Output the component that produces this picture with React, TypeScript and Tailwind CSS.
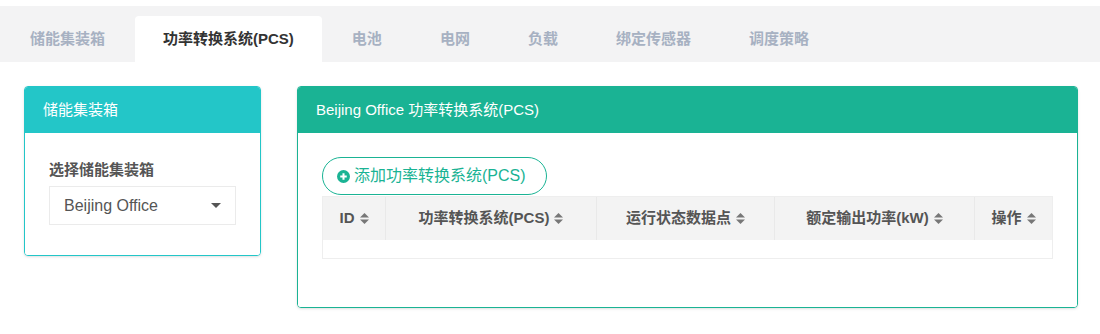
import React from 'react';

const font = { fontFamily: '"Liberation Sans", "Noto Sans CJK SC", sans-serif' };

function SortIcon() {
  return (
    <svg width="9" height="13" viewBox="0 0 9 13" className="ml-[5px] inline-block">
      <path d="M0 5.5 L4.5 1 L9 5.5 Z" fill="#777" />
      <path d="M0 7.5 L4.5 12 L9 7.5 Z" fill="#777" />
    </svg>
  );
}

export default function App() {
  const tabs = ['储能集装箱', '功率转换系统(PCS)', '电池', '电网', '负载', '绑定传感器', '调度策略'];
  const active = 1;

  const columns = [
    { label: 'ID', width: 'w-[62px]' },
    { label: '功率转换系统(PCS)', width: 'w-[211px]' },
    { label: '运行状态数据点', width: 'w-[178px]' },
    { label: '额定输出功率(kW)', width: 'w-[200px]' },
    { label: '操作', width: 'flex-1' },
  ];

  return (
    <div className="w-[1100px] h-[334px] bg-white pt-[6px]" style={font}>
      {/* Tabs */}
      <div className="flex h-[56px] items-end bg-[#f3f3f4] pl-[2px] gap-[2px]">
        {tabs.map((tab, i) => (
          <div
            key={tab}
            className={`h-[46px] px-[28px] flex items-center text-[15px] font-bold ${
              i === active ? 'bg-white text-[#333] rounded-t-[4px]' : 'text-[#a7b1c2]'
            }`}
          >
            <span>{tab}</span>
          </div>
        ))}
      </div>

      {/* Content */}
      <div className="flex items-start gap-[36px] pl-[24px] pt-[24px]">
        {/* Left panel */}
        <div className="w-[237px] rounded-[4px] border border-[#23c6c8] shadow-sm overflow-hidden">
          <div className="h-[46px] bg-[#23c6c8] text-white text-[15px] flex items-center px-[18px]">储能集装箱</div>
          <div className="px-[24px] pt-[26px] pb-[30px] bg-white">
            <div className="text-[15px] font-bold text-[#555] leading-[22px] mb-[5px]">选择储能集装箱</div>
            <div className="h-[39px] border border-[#ebebeb] flex items-center justify-between pl-[14px] pr-[14px] text-[16px] text-[#555]">
              <span>Beijing Office</span>
              <svg width="10" height="5" viewBox="0 0 10 5">
                <path d="M0 0 L10 0 L5 5 Z" fill="#555" />
              </svg>
            </div>
          </div>
        </div>

        {/* Right panel */}
        <div className="w-[781px] rounded-[4px] border border-[#1ab394] shadow-sm overflow-hidden">
          <div className="h-[46px] bg-[#1ab394] text-white text-[15px] flex items-center px-[18px]">Beijing Office 功率转换系统(PCS)</div>
          <div className="bg-white px-[24px] pt-[24px] pb-[48px]">
            <button className="h-[38px] w-[225px] rounded-full border border-[#1ab394] text-[#1ab394] text-[16px] flex items-center pl-[14px]">
              <svg width="13" height="13" viewBox="0 0 14 14" className="mr-[4px]">
                <circle cx="7" cy="7" r="7" fill="#1ab394" />
                <path d="M7 3.5 V10.5 M3.5 7 H10.5" stroke="white" strokeWidth="2.2" />
              </svg>
              添加功率转换系统(PCS)
            </button>
            <div className="mt-[1px] border border-[#eeeeee]">
              <div className="flex h-[43px] bg-[#f3f3f3]">
                {columns.map((c, i) => (
                  <div
                    key={c.label}
                    className={`${c.width} flex items-center justify-center text-[15px] font-bold text-[#555] ${
                      i > 0 ? 'border-l border-[#e9e9e9]' : ''
                    }`}
                  >
                    {c.label}
                    <SortIcon />
                  </div>
                ))}
              </div>
              <div className="h-[18px] bg-white"></div>
            </div>
          </div>
        </div>
      </div>
    </div>
  );
}
